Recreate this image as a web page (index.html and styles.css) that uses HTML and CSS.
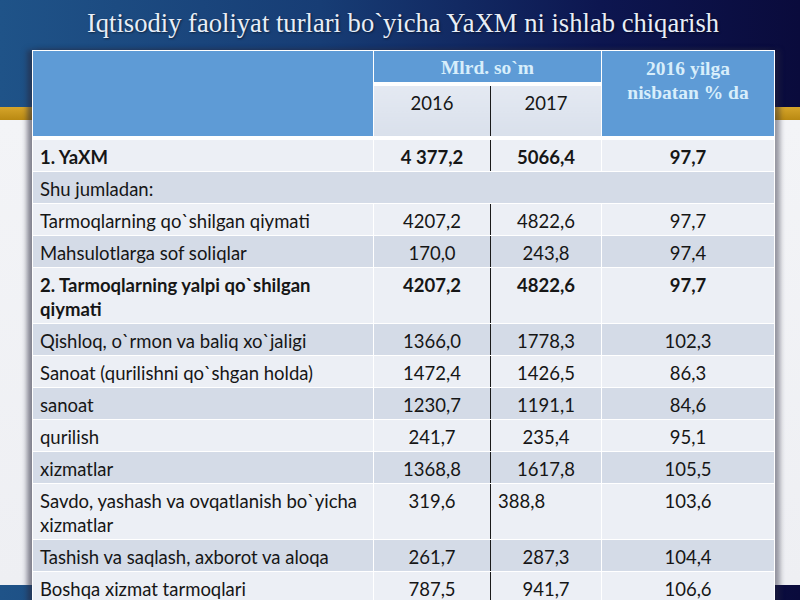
FILE: index.html
```html
<!DOCTYPE html>
<html>
<head>
<meta charset="utf-8">
<link rel="stylesheet" href="styles.css">
</head>
<body>
<div class="slide">
  <h1 class="title">Iqtisodiy faoliyat turlari bo`yicha YaXM ni ishlab chiqarish</h1>
  <table class="grid">
    <colgroup>
      <col class="c1"><col class="c2"><col class="c3"><col class="c4">
    </colgroup>
    <thead>
      <tr class="h1row">
        <th class="hblue" rowspan="2"></th>
        <th class="hblue hunit" colspan="2">Mlrd. so`m</th>
        <th class="hblue hpct" rowspan="2">2016 yilga<br>nisbatan % da</th>
      </tr>
      <tr class="h2row">
        <th class="hyear sep">2016</th>
        <th class="hyear">2017</th>
      </tr>
    </thead>
    <tbody>
      <tr class="lt bold"><td class="name">1. YaXM</td><td class="num sep">4 377,2</td><td class="num">5066,4</td><td class="num">97,7</td></tr>
      <tr class="dk"><td class="name" colspan="4">Shu jumladan:</td></tr>
      <tr class="lt"><td class="name">Tarmoqlarning qo`shilgan qiymati</td><td class="num sep">4207,2</td><td class="num">4822,6</td><td class="num">97,7</td></tr>
      <tr class="dk"><td class="name">Mahsulotlarga sof soliqlar</td><td class="num sep">170,0</td><td class="num">243,8</td><td class="num">97,4</td></tr>
      <tr class="lt bold"><td class="name">2. Tarmoqlarning yalpi qo`shilgan qiymati</td><td class="num sep">4207,2</td><td class="num">4822,6</td><td class="num">97,7</td></tr>
      <tr class="dk"><td class="name">Qishloq, o`rmon va baliq xo`jaligi</td><td class="num sep">1366,0</td><td class="num">1778,3</td><td class="num">102,3</td></tr>
      <tr class="lt"><td class="name">Sanoat (qurilishni qo`shgan holda)</td><td class="num sep">1472,4</td><td class="num">1426,5</td><td class="num">86,3</td></tr>
      <tr class="dk"><td class="name">sanoat</td><td class="num sep">1230,7</td><td class="num">1191,1</td><td class="num">84,6</td></tr>
      <tr class="lt"><td class="name">qurilish</td><td class="num sep">241,7</td><td class="num">235,4</td><td class="num">95,1</td></tr>
      <tr class="dk"><td class="name">xizmatlar</td><td class="num sep">1368,8</td><td class="num">1617,8</td><td class="num">105,5</td></tr>
      <tr class="lt"><td class="name">Savdo, yashash va ovqatlanish bo`yicha xizmatlar</td><td class="num sep">319,6</td><td class="num left">388,8</td><td class="num">103,6</td></tr>
      <tr class="dk"><td class="name">Tashish va saqlash, axborot va aloqa</td><td class="num sep">261,7</td><td class="num">287,3</td><td class="num">104,4</td></tr>
      <tr class="lt"><td class="name">Boshqa xizmat tarmoqlari</td><td class="num sep">787,5</td><td class="num">941,7</td><td class="num">106,6</td></tr>
    </tbody>
  </table>
</div>
</body>
</html>
```

FILE: styles.css
```css
html, body {
  margin: 0;
  padding: 0;
}
body {
  width: 800px;
  height: 600px;
  overflow: hidden;
}
.slide {
  width: 800px;
  height: 600px;
  overflow: hidden;
  background:
    linear-gradient(to bottom, transparent 0, transparent 107px, #d6a52a 107px, #b98912 120px, #f3f4f7 120px, #eeeff3 585px, transparent 585px),
    linear-gradient(to right, #1f5388 0%, #173d75 40%, #0d1650 75%, #0a0b3c 100%);
}
.title {
  margin: 0;
  padding: 7px 0 0 6px;
  height: 44px;
  box-sizing: border-box;
  text-align: center;
  font-family: "Liberation Serif", "Times New Roman", serif;
  font-weight: normal;
  font-size: 26.6px;
  line-height: 32px;
  color: #e8eef7;
  text-shadow: 1px 1px 2px rgba(0,0,0,0.5);
}
.grid {
  margin: 6px 0 0 32px;
  width: 742px;
  border-collapse: collapse;
  table-layout: fixed;
  font-family: Lato, "Noto Sans", sans-serif;
  font-size: 18.5px;
  color: #161616;
  box-shadow: -5px 0 5px rgba(40,40,60,0.55), 5px 0 5px rgba(40,40,60,0.45);
}
.c1 { width: 341px; }
.c2 { width: 117px; }
.c3 { width: 111px; }
.c4 { width: 173px; }

th, td {
  padding: 0;
  border: 1px solid #ffffff;
}
.hblue {
  background: #5e9bd6;
  color: #d8eefb;
  font-family: "Liberation Serif", "Times New Roman", serif;
  font-weight: bold;
  font-size: 19.5px;
  line-height: 24px;
}
.h1row { height: 33px; }
.h2row { height: 54px; }
.hunit {
  text-align: center;
  vertical-align: middle;
  padding-top: 3px;
}
.hpct {
  text-align: center;
  vertical-align: top;
  padding-top: 6px;
}
.hyear {
  background: linear-gradient(to bottom, #e4e9f2, #d9e0eb);
  font-weight: normal;
  font-size: 18.5px;
  line-height: 24px;
  vertical-align: top;
  padding-top: 5px;
  color: #161616;
}
thead tr:last-child th, thead .hblue {
  border-bottom: 4px solid #ffffff;
}
.sep {
  border-right: 1px solid #1a1a1a;
}
tbody td {
  line-height: 24px;
  padding: 5px 0 2px 0;
  vertical-align: top;
}
.lt td { background: #eceff5; }
.dk td { background: #d4dbe7; }
.bold td { font-weight: bold; }
.name {
  padding-left: 7px !important;
  padding-right: 6px !important;
  text-align: left;
}
.num { text-align: center; }
.num.left { text-align: left; padding-left: 7px; }
```
